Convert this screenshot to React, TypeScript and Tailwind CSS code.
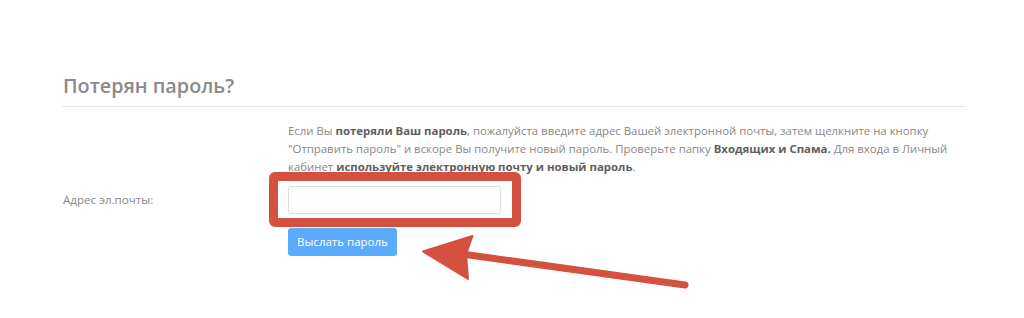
import React from "react";

export default function App() {
  return (
    <div className="relative w-[1024px] h-[318px] bg-white overflow-hidden font-['Open_Sans',sans-serif]">
      <div className="pt-[74px] pl-[62px] w-[966px]">
        <h2 className="text-[19.8px] font-semibold leading-[24px] text-[#8a8a8a] pb-[8px] border-b border-[#e6e6e6] pl-[1px]">
          Потерян пароль?
        </h2>
        <div className="flex mt-[15px]">
          <div className="w-[226px] shrink-0" />
          <p className="text-[11.4px] leading-[18px] text-[#888888]">
            Если Вы <b className="font-bold text-[#5e5e5e]">потеряли Ваш пароль</b>, пожалуйста введите адрес Вашей
            электронной почты, затем щелкните на кнопку "Отправить пароль" и вскоре Вы получите новый пароль.
            Проверьте папку <b className="font-bold text-[#5e5e5e]">Входящих и Спама.</b> Для входа в Личный кабинет{" "}
            <b className="font-bold text-[#5e5e5e]">используйте электронную почту и новый пароль</b>.
          </p>
        </div>
        <div className="flex items-center mt-[10px]">
          <label className="w-[226px] shrink-0 text-[11.6px] text-[#888888] pl-[1px]">Адрес эл.почты:</label>
          <input
            type="text"
            className="w-[213px] h-[28px] border border-[#dcdcdc] rounded-[3px] bg-white outline-none"
          />
        </div>
        <div className="flex mt-[14px]">
          <div className="w-[226px] shrink-0" />
          <button className="w-[109px] h-[28px] rounded-[3px] bg-[#5aabfc] text-white text-[11.5px]">
            Выслать пароль
          </button>
        </div>
      </div>

      <div className="absolute left-[269px] top-[172px] w-[252px] h-[55px] border-[9px] border-[#d4513f] rounded-[6px]" />

      <svg className="absolute left-0 top-0" width="1024" height="318" viewBox="0 0 1024 318">
        <line x1="462" y1="254" x2="685" y2="285" stroke="#d4513f" strokeWidth="7" strokeLinecap="round" />
        <polygon
          points="423,251.5 472.5,236 466,254 468,279"
          fill="#d4513f"
          stroke="#d4513f"
          strokeWidth="2"
          strokeLinejoin="round"
        />
      </svg>
    </div>
  );
}
